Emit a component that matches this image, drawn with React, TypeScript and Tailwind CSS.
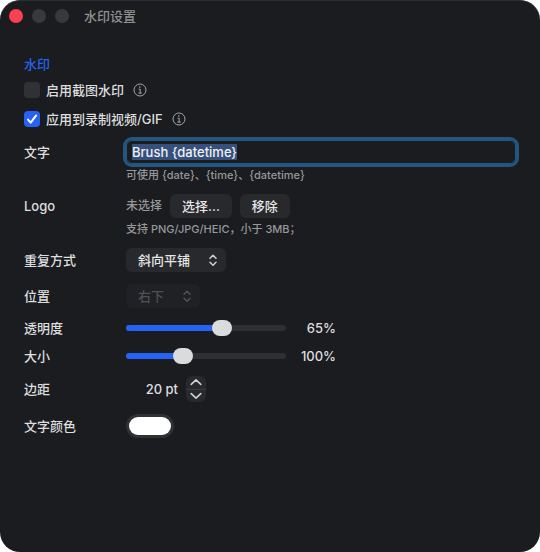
import { useEffect, useRef, useState } from "react";
import type { ReactNode } from "react";

const buttonClass =
  "h-6 rounded-md bg-[#28292c] px-3 text-[13px] leading-4 font-medium text-[#e6e6e7]";

function InfoIcon() {
  return (
    <svg viewBox="0 0 14 14" className="size-[14px]" fill="none" stroke="#a5a6a8" aria-hidden="true">
      <circle cx="7" cy="7" r="6" />
      <circle cx="6.8" cy="4" r="0.8" fill="#a5a6a8" stroke="none" />
      <path d="M5.6 6.2h1.6v3.9M5.4 10.1h3.4" />
    </svg>
  );
}

function CheckRow({ id, label, defaultChecked }: { id: string; label: string; defaultChecked?: boolean }) {
  return (
    <div className="flex h-[17px] items-center">
      <span className="relative size-4">
        <input
          id={id}
          type="checkbox"
          defaultChecked={defaultChecked}
          className="peer block size-4 appearance-none rounded bg-[#303134] checked:bg-[#2463f5]"
        />
        <svg
          viewBox="0 0 16 16"
          className="pointer-events-none absolute inset-0 hidden size-4 peer-checked:block"
          fill="none"
          stroke="white"
          strokeWidth="2"
          strokeLinecap="round"
          strokeLinejoin="round"
        >
          <path d="M4 8.6l2.7 3L12 4.6" />
        </svg>
      </span>
      <label htmlFor={id} className="ml-[6px]">
        {label}
      </label>
      <button type="button" aria-label="说明" className="ml-[9px]">
        <InfoIcon />
      </button>
    </div>
  );
}

function Row({ id, label, hint, children }: { id: string; label: string; hint?: string; children: ReactNode }) {
  return (
    <div className="grid grid-cols-[102px_1fr] items-center">
      <label htmlFor={id}>{label}</label>
      <div className="flex items-center">{children}</div>
      {hint && (
        <p className="col-start-2 mt-1 text-[11px] leading-[14px] font-medium text-[#97989a]">{hint}</p>
      )}
    </div>
  );
}

function Popup({ id, options, disabled, className }: { id: string; options: string[]; disabled?: boolean; className: string }) {
  return (
    <span className={`relative ${className}`}>
      <select
        id={id}
        disabled={disabled}
        className="block h-6 w-full appearance-none rounded-md bg-[#28292c] px-3 text-[13px] leading-4 font-medium text-[#e6e6e7] disabled:bg-[#1f2124] disabled:text-[#505154] disabled:opacity-100"
      >
        {options.map((option) => (
          <option key={option}>{option}</option>
        ))}
      </select>
      <svg
        viewBox="0 0 8 12"
        className={`pointer-events-none absolute top-[6px] right-[9px] h-3 w-2 ${disabled ? "text-[#505154]" : "text-[#d0d1d2]"}`}
        fill="none"
        stroke="currentColor"
        strokeWidth="1.5"
        strokeLinecap="round"
        strokeLinejoin="round"
      >
        <path d="M1 4.2L4 1.2l3 3M1 8.2l3 3 3-3" />
      </svg>
    </span>
  );
}

function Slider({ id, min, max, initial }: { id: string; min: number; max: number; initial: number }) {
  const [value, setValue] = useState(initial);
  const percent = ((value - min) / (max - min)) * 100;

  return (
    <>
      <span className="relative flex h-4 w-40 items-center">
        <span className="absolute inset-x-0 h-[6px] overflow-hidden rounded-full bg-[#2e2f32]">
          <span className="block h-full bg-[#2463f5]" style={{ width: `${percent}%` }} />
        </span>
        <input
          id={id}
          type="range"
          min={min}
          max={max}
          value={value}
          onChange={(e) => setValue(Number(e.target.value))}
          className="relative h-4 w-full appearance-none bg-transparent [&::-webkit-slider-thumb]:h-4 [&::-webkit-slider-thumb]:w-5 [&::-webkit-slider-thumb]:appearance-none [&::-webkit-slider-thumb]:rounded-full [&::-webkit-slider-thumb]:bg-[#dadbdc]"
        />
      </span>
      <output htmlFor={id} className="w-[50px] text-right">
        {value}%
      </output>
    </>
  );
}

export default function App() {
  const textRef = useRef<HTMLInputElement>(null);
  const [margin, setMargin] = useState(20);

  useEffect(() => {
    textRef.current?.focus();
    textRef.current?.select();
  }, []);

  return (
    <div className="min-h-screen bg-white">
      <div className="min-h-screen rounded-[20px] border-t border-[#2c2d30] bg-[#1a1c1f] font-['Inter','Noto_Sans_CJK_SC',sans-serif] text-[13px] leading-4 font-medium text-[#dededf]">
        <header className="flex h-[30px] items-center gap-[9px] pl-[9px]">
          <button type="button" aria-label="关闭" className="size-[14px] rounded-full bg-[#fb4150]" />
          <button type="button" aria-label="最小化" disabled className="size-[14px] rounded-full bg-[#38393c]" />
          <button type="button" aria-label="缩放" disabled className="size-[14px] rounded-full bg-[#38393c]" />
          <h1 className="ml-[6px] text-[#8f9092]">水印设置</h1>
        </header>

        <form className="px-6 pt-[25px] pb-6" onSubmit={(e) => e.preventDefault()}>
          <h2 className="text-[#2463f5]">水印</h2>

          <div className="mt-[9px] flex flex-col gap-3">
            <CheckRow id="screenshot" label="启用截图水印" />
            <CheckRow id="recording" label="应用到录制视频/GIF" defaultChecked />
          </div>

          <div className="mt-[13px] flex flex-col gap-3">
            <Row id="text" label="文字" hint="可使用 {date}、{time}、{datetime}">
              <input
                ref={textRef}
                id="text"
                type="text"
                defaultValue="Brush {datetime}"
                className="h-6 w-full rounded-md border border-[#245682] px-[5px] text-[#f0f0f1] ring-3 ring-[#245682] outline-none selection:bg-[#36507e] selection:text-[#f0f0f1]"
              />
            </Row>

            <Row id="logo" label="Logo" hint="支持 PNG/JPG/HEIC，小于 3MB；">
              <span className="text-[12px] text-[#97989a]">未选择</span>
              <button id="logo" type="button" className={`ml-2 ${buttonClass}`}>
                选择...
              </button>
              <button type="button" className={`ml-2 ${buttonClass}`}>
                移除
              </button>
            </Row>

            <Row id="repeat" label="重复方式">
              <Popup id="repeat" options={["斜向平铺", "单个"]} className="w-[100px]" />
            </Row>

            <Row id="position" label="位置">
              <Popup id="position" options={["右下", "左下"]} disabled className="w-[74px]" />
            </Row>

            <Row id="opacity" label="透明度">
              <Slider id="opacity" min={10} max={100} initial={65} />
            </Row>

            <Row id="size" label="大小">
              <Slider id="size" min={50} max={200} initial={100} />
            </Row>

            <Row id="margin" label="边距">
              <output className="w-[52px] text-right">{margin} pt</output>
              <span className="ml-2 flex h-[26px] w-5 flex-col divide-y divide-[#3c3d40] rounded-md bg-[#28292c]">
                <button
                  id="margin"
                  type="button"
                  aria-label="增加"
                  onClick={() => setMargin(margin + 1)}
                  className="flex flex-1 items-center justify-center"
                >
                  <svg viewBox="0 0 12 8" className="h-2 w-3" fill="none" stroke="#d0d1d2" strokeWidth="1.6" strokeLinecap="round" strokeLinejoin="round">
                    <path d="M1.2 6.4L6 1.8l4.8 4.6" />
                  </svg>
                </button>
                <button
                  type="button"
                  aria-label="减少"
                  onClick={() => setMargin(Math.max(0, margin - 1))}
                  className="flex flex-1 items-center justify-center"
                >
                  <svg viewBox="0 0 12 8" className="h-2 w-3" fill="none" stroke="#d0d1d2" strokeWidth="1.6" strokeLinecap="round" strokeLinejoin="round">
                    <path d="M1.2 1.6L6 6.2l4.8-4.6" />
                  </svg>
                </button>
              </span>
            </Row>

            <Row id="color" label="文字颜色">
              <input
                id="color"
                type="color"
                defaultValue="#ffffff"
                className="h-6 w-12 appearance-none rounded-full bg-[#303134] p-[3px] [&::-webkit-color-swatch]:rounded-full [&::-webkit-color-swatch]:border-0 [&::-webkit-color-swatch-wrapper]:p-0"
              />
            </Row>
          </div>
        </form>
      </div>
    </div>
  );
}
